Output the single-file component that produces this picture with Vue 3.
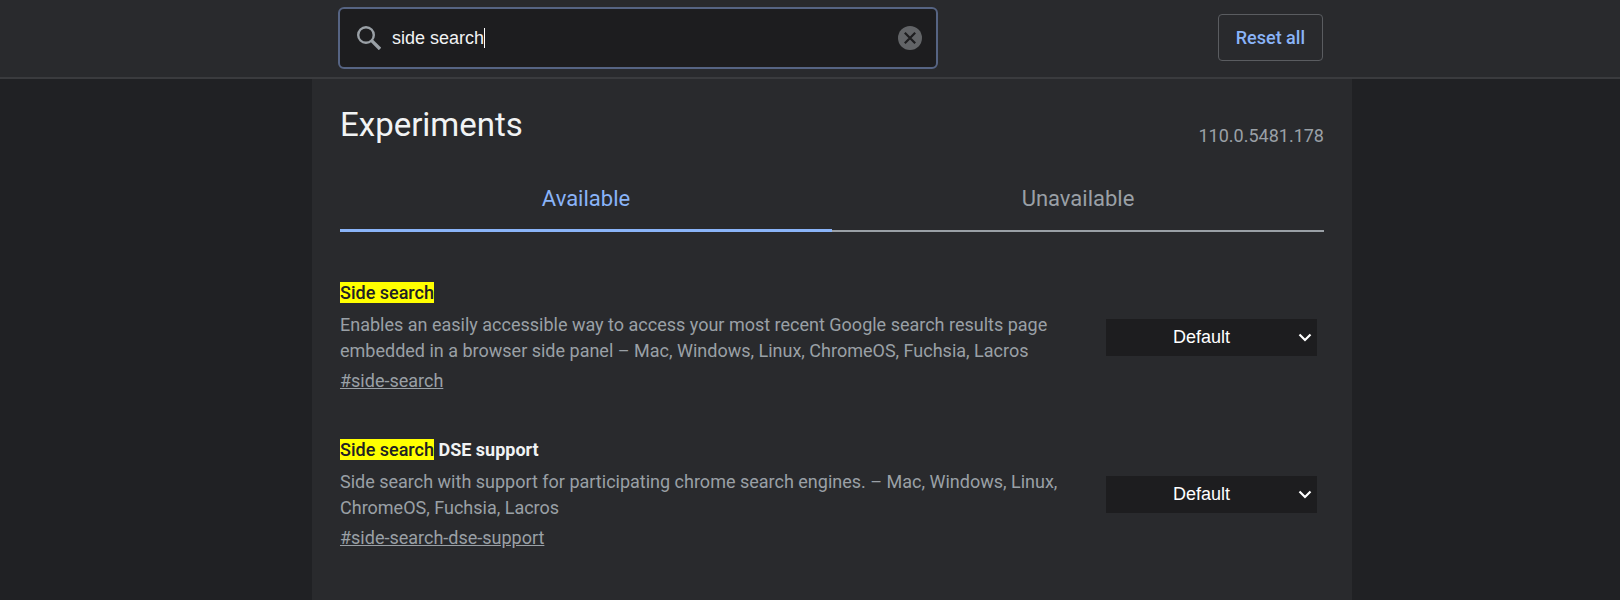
<template>
  <div class="flags">
    <header class="header">
      <div class="header-content">
        <div class="search" :class="{ focused: isFocused }">
          <svg class="search-icon" viewBox="0 0 24 24" aria-hidden="true">
            <circle cx="9" cy="9" r="7.8" fill="none" stroke="#9aa0a6" stroke-width="2.4" />
            <path d="M14.4 14.4L23 23" stroke="#9aa0a6" stroke-width="3.4" />
          </svg>
          <input class="search-input" type="text" v-model="term" ref="searchField"
            aria-label="Search flags" autocomplete="off" spellcheck="false"
            @focus="isFocused = true" @blur="isFocused = false" />
          <span class="caret" v-if="isFocused"></span>
          <button class="clear" type="button" aria-label="Clear search" @click="clearSearch">
            <svg viewBox="0 0 24 24" aria-hidden="true">
              <circle cx="12" cy="12" r="12" fill="#626467" />
              <path d="M6.8 6.8L17.2 17.2M17.2 6.8L6.8 17.2" stroke="#1d1d1f" stroke-width="2.2" />
            </svg>
          </button>
        </div>
        <button class="reset" type="button" @click="resetAll">Reset all</button>
      </div>
    </header>
    <div class="page">
      <main class="body">
        <div class="title-row">
          <h1 class="title">Experiments</h1>
          <span class="version">110.0.5481.178</span>
        </div>
        <div class="tabs" role="tablist">
          <button v-for="tab in tabs" :key="tab" class="tab" type="button" role="tab"
            :class="{ selected: tab == activeTab }" :aria-selected="tab == activeTab"
            @click="activeTab = tab">{{ tab }}</button>
        </div>
        <div class="experiments">
          <section class="experiment" v-for="item in experiments" :key="item.id">
            <div class="text">
              <h2 class="name"><mark class="match">{{ item.match }}</mark>{{ item.rest }}</h2>
              <p class="description">{{ item.description }} – {{ item.platforms }}</p>
              <a class="permalink" :href="'#' + item.id">#{{ item.id }}</a>
            </div>
            <div class="select-wrap">
              <select class="select" v-model="item.state" :aria-label="item.match + item.rest">
                <option>Default</option>
                <option>Enabled</option>
                <option>Disabled</option>
              </select>
              <svg class="arrow" viewBox="0 0 14 9" aria-hidden="true">
                <path d="M1.5 1.5L7 7L12.5 1.5" fill="none" stroke="#fff" stroke-width="2.2" />
              </svg>
            </div>
          </section>
        </div>
      </main>
    </div>
  </div>
</template>
<script setup>
import { ref } from 'vue';

const term = ref('side search');
const isFocused = ref(true);
const searchField = ref(null);
const tabs = ['Available', 'Unavailable'];
const activeTab = ref('Available');

const experiments = ref([
  {
    id: 'side-search',
    match: 'Side search',
    rest: '',
    description: 'Enables an easily accessible way to access your most recent Google search results page embedded in a browser side panel',
    platforms: 'Mac, Windows, Linux, ChromeOS, Fuchsia, Lacros',
    state: 'Default'
  },
  {
    id: 'side-search-dse-support',
    match: 'Side search',
    rest: ' DSE support',
    description: 'Side search with support for participating chrome search engines.',
    platforms: 'Mac, Windows, Linux, ChromeOS, Fuchsia, Lacros',
    state: 'Default'
  }
]);

function clearSearch() {
  term.value = '';
  searchField.value.focus();
}

function resetAll() {
  experiments.value.forEach((item) => {
    item.state = 'Default';
  });
}
</script>

<style>
body {
  margin: 0;
  background-color: #202124;
}
</style>

<style scoped>
.flags {
  min-height: 100vh;
  display: flex;
  flex-direction: column;
  font-family: Roboto, sans-serif;
  color: #f1f3f4;
  background-color: #202124;
}

.header {
  padding-left: 44px;
  background-color: #292a2d;
  border-bottom: 2px solid #3a3b3e;
}

.header-content {
  box-sizing: border-box;
  max-width: 1040px;
  height: 77px;
  margin: 0 auto;
  padding: 0 29px 2px 26px;
  display: flex;
  align-items: center;
  justify-content: space-between;
}

.search {
  box-sizing: border-box;
  flex: 0 1 600px;
  height: 62px;
  padding: 0 14px 0 17px;
  display: flex;
  align-items: center;
  border: 2px solid #3c4043;
  border-radius: 6px;
  background-color: #1d1d1f;
}

.search.focused {
  border-color: #566483;
}

.search-icon {
  width: 24px;
  height: 24px;
  margin-right: 11px;
}

.search-input {
  field-sizing: content;
  padding: 2px 0 0;
  border: 0;
  outline: none;
  background: none;
  color: #f1f3f4;
  caret-color: transparent;
  font-family: 'Liberation Sans', Arial, sans-serif;
  font-size: 18px;
}

.caret {
  width: 1px;
  height: 20px;
  background-color: #fff;
}

.clear {
  width: 24px;
  height: 24px;
  margin-left: auto;
  padding: 0;
  border: 0;
  background: none;
}

.clear svg {
  display: block;
}

.reset {
  height: 47px;
  padding: 0 17px;
  border: 1px solid #5a5c60;
  border-radius: 4px;
  background: none;
  color: #8ab4f8;
  font-family: inherit;
  font-size: 18px;
  font-weight: 500;
}

.page {
  flex: 1;
  display: flex;
  padding-left: 44px;
}

.body {
  box-sizing: border-box;
  flex: 1;
  max-width: 1040px;
  margin: 0 auto;
  padding: 24px 28px 0;
  background-color: #292a2d;
}

.title-row {
  display: flex;
  justify-content: space-between;
  align-items: flex-end;
}

.title {
  margin: 0;
  font-size: 33px;
  font-weight: 400;
  line-height: 44px;
}

.version {
  font-size: 18px;
  line-height: 22px;
  color: #9aa0a6;
}

.tabs {
  display: flex;
  margin-top: 23px;
}

.tab {
  flex: 1;
  height: 62px;
  padding: 0 0 3px;
  border: 0;
  border-bottom: 2px solid #9aa0a6;
  background: none;
  color: #9aa0a6;
  font-family: inherit;
  font-size: 22px;
}

.tab.selected {
  padding-bottom: 2px;
  border-bottom: 3px solid #8ab4f8;
  color: #8ab4f8;
}

.experiments {
  display: flex;
  flex-direction: column;
  gap: 43px;
  padding: 48px 7px 44px 0;
}

.experiment {
  display: flex;
  align-items: center;
  justify-content: space-between;
}

.text {
  flex: 0 1 736px;
}

.name {
  margin: 0;
  font-size: 18px;
  font-weight: 700;
  line-height: 26px;
}

.match {
  background-color: #ff0;
  color: #202124;
  font-weight: 500;
}

.description {
  margin: 6px 0 4px;
  font-size: 18px;
  line-height: 26px;
  color: #9aa0a6;
}

.permalink {
  display: inline-block;
  font-size: 18px;
  line-height: 26px;
  color: #9aa0a6;
}

.select-wrap {
  position: relative;
  flex: 0 0 211px;
}

.select {
  appearance: none;
  display: block;
  width: 100%;
  height: 37px;
  padding: 0 20px 0 0;
  border: 0;
  background-color: #1d1d1f;
  color: #fff;
  font-family: 'Liberation Sans', Arial, sans-serif;
  font-size: 18px;
  text-align: center;
  text-align-last: center;
}

.arrow {
  position: absolute;
  top: 14px;
  right: 5px;
  width: 14px;
  height: 9px;
  pointer-events: none;
}
</style>
